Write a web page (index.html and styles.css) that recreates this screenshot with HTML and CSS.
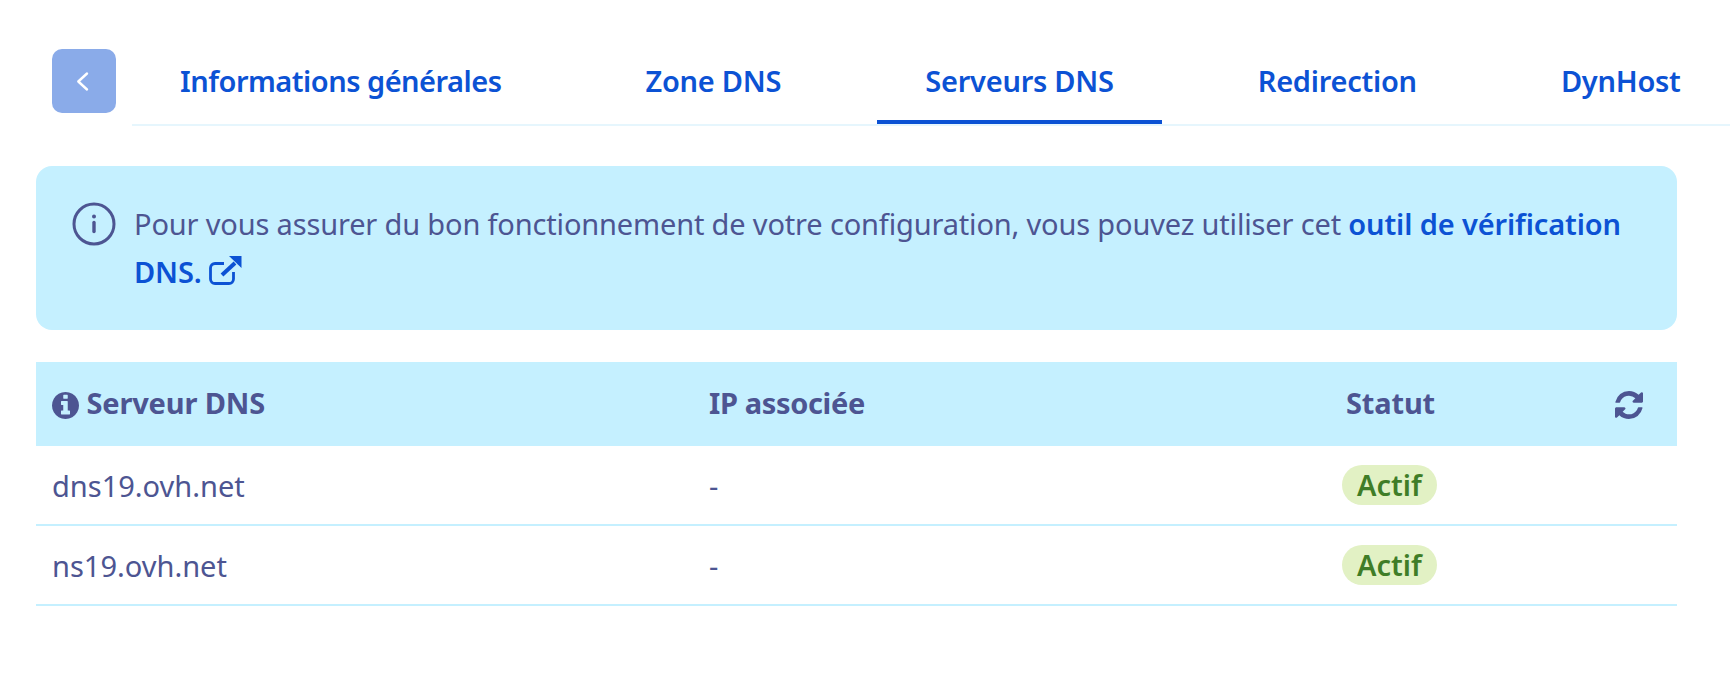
FILE: index.html
```html
<!DOCTYPE html>
<html lang="fr">
<head>
  <meta charset="UTF-8" />
  <title>Serveurs DNS</title>
  <link rel="stylesheet" href="styles.css">
</head>
<body>

<!-- Tabs -->
<div class="nav">
  <button class="back-btn">
    <svg width="16" height="22" viewBox="0 0 16 22"><path d="M11 3.500 2.300 11.500l8.700 8" fill="none" stroke="#fff" stroke-width="2.4" stroke-linecap="round" stroke-linejoin="round"/></svg>
  </button>
  <div class="tabs">
    <a class="tab tab-first">Informations générales</a>
    <a class="tab">Zone DNS</a>
    <a class="tab active">Serveurs DNS</a>
    <a class="tab">Redirection</a>
    <a class="tab">DynHost</a>
  </div>
</div>

<!-- Info message -->
<div class="alert">
  <svg class="alert-icon" width="44" height="44" viewBox="0 0 44 44">
    <circle cx="22" cy="22" r="20" fill="none" stroke="#4d5592" stroke-width="3"/>
    <circle cx="22" cy="14.5" r="2" fill="#4d5592"/>
    <path d="M22 20.5v9" stroke="#4d5592" stroke-width="3.4" stroke-linecap="round"/>
  </svg>
  <p class="alert-text">
    Pour vous assurer du bon fonctionnement de votre configuration, vous pouvez utiliser cet
    <a class="link">outil de vérification</a>
    <a class="link">DNS.<svg class="ext-icon" width="33" height="30" viewBox="0 0 33 30">
        <path d="M15 8.500H6A4.500 4.500 0 0 0 1.500 13v11A4.500 4.500 0 0 0 6 28.500h14a4.500 4.500 0 0 0 4.500-4.500v-7" fill="none" stroke="#0c52d4" stroke-width="2.800"/>
        <path d="M13 20 26 8" fill="none" stroke="#0c52d4" stroke-width="4"/>
        <path d="M20 1h12.500v12z" fill="#0c52d4"/>
      </svg></a>
  </p>
</div>

<!-- DNS servers -->
<table class="dns-table">
  <colgroup>
    <col class="col-name"><col class="col-ip"><col class="col-status"><col class="col-action">
  </colgroup>
  <thead>
    <tr>
      <th>
        <svg class="th-icon" width="27" height="27" viewBox="128 128 1536 1536"><path fill="#4d5592" d="M1152 1376v-160q0-14-9-23t-23-9h-96v-512q0-14-9-23t-23-9h-320q-14 0-23 9t-9 23v160q0 14 9 23t23 9h96v320h-96q-14 0-23 9t-9 23v160q0 14 9 23t23 9h448q14 0 23-9t9-23zm-128-896v-160q0-14-9-23t-23-9h-192q-14 0-23 9t-9 23v160q0 14 9 23t23 9h192q14 0 23-9t9-23zm640 416q0 209-103 385.500t-279.500 279.500-385.500 103-385.500-103-279.500-279.500-103-385.500 103-385.500 279.500-279.500 385.500-103 385.500 103 279.500 279.500 103 385.500z"/></svg>
        Serveur DNS
      </th>
      <th class="th-ip">IP associée</th>
      <th>Statut</th>
      <th>
        <svg class="th-icon" width="28" height="28" viewBox="128 128 1536 1536"><path fill="#4d5592" d="M1639 1056q0 5-1 7-64 268-268 434.500t-478 166.500q-146 0-282.500-55t-243.500-157l-129 129q-19 19-45 19t-45-19-19-45v-448q0-26 19-45t45-19h448q26 0 45 19t19 45-19 45l-137 137q71 66 161 102t187 36q134 0 250-65t186-179q11-17 53-117 8-23 30-23h192q13 0 22.500 9.500t9.500 22.500zm25-800v448q0 26-19 45t-45 19h-448q-26 0-45-19t-19-45 19-45l138-138q-148-137-349-137-134 0-250 65t-186 179q-11 17-53 117-8 23-30 23h-199q-13 0-22.500-9.500t-9.500-22.500v-7q65-268 270-434.500t480-166.500q146 0 284 55.500t245 156.500l130-129q19-19 45-19t45 19 19 45z"/></svg>
      </th>
    </tr>
  </thead>
  <tbody>
    <tr>
      <td>dns19.ovh.net</td>
      <td>-</td>
      <td><span class="badge">Actif</span></td>
      <td></td>
    </tr>
    <tr>
      <td>ns19.ovh.net</td>
      <td>-</td>
      <td><span class="badge">Actif</span></td>
      <td></td>
    </tr>
  </tbody>
</table>

</body>
</html>
```

FILE: styles.css
```css
body {
  margin: 0;
  padding-top: 49px;
  font-family: 'Noto Sans', 'Lato', sans-serif;
  font-size: 29px;
  color: #4d5592;
  background: #fff;
  overflow: hidden;
}

.nav {
  display: flex;
  align-items: flex-start;
  gap: 16px;
  margin-left: 52px;
}

.back-btn {
  flex: none;
  display: flex;
  align-items: center;
  justify-content: center;
  width: 64px;
  height: 64px;
  padding: 0;
  border: none;
  border-radius: 10px;
  background: #8aabe9;
}

.tabs {
  flex: 1;
  min-width: 0;
  display: flex;
  gap: 48px;
  height: 75px;
  border-bottom: 2px solid #e6f6fd;
}

.tab {
  flex: none;
  height: 71px;
  padding: 0 48px;
  border-bottom: 4px solid transparent;
  font-weight: 600;
  line-height: 64px;
  color: #0c52d4;
  letter-spacing: -0.25px;
  white-space: nowrap;
}

.tab-first {
  letter-spacing: -0.5px;
}

.tab.active {
  border-bottom-color: #0c52d4;
}

.alert {
  display: flex;
  gap: 18px;
  box-sizing: border-box;
  height: 164px;
  margin: 40px 53px 0 36px;
  padding: 34px 36px;
  border-radius: 16px;
  background: #c5f0ff;
}

.alert-icon {
  flex: none;
  margin-top: 2px;
}

.alert-text {
  margin: 0;
  line-height: 48px;
  letter-spacing: -0.16px;
}

.link {
  font-weight: 600;
  color: #0c52d4;
  letter-spacing: -0.13px;
}

.ext-icon {
  vertical-align: -2px;
  margin-left: 7px;
}

.dns-table {
  width: 1641px;
  margin: 32px 0 0 36px;
  border-collapse: collapse;
  table-layout: fixed;
}

.col-name { width: 657px; }
.col-ip { width: 637px; }
.col-status { width: 269px; }
.col-action { width: 78px; }

.dns-table th {
  height: 80px;
  padding: 0 16px 4px;
  background: #c5f0ff;
  font-weight: 700;
  text-align: left;
  letter-spacing: -0.15px;
}

.dns-table .th-ip {
  letter-spacing: -0.35px;
}

.th-icon {
  vertical-align: -5px;
}

.dns-table td {
  height: 78px;
  padding: 0 16px;
  border-bottom: 2px solid #c5f0ff;
}

.badge {
  display: inline-block;
  height: 40px;
  margin-left: -4px;
  padding: 0 15px;
  border-radius: 20px;
  background: #e2f1c4;
  font-weight: 600;
  line-height: 40px;
  color: #3f7d27;
}
```
